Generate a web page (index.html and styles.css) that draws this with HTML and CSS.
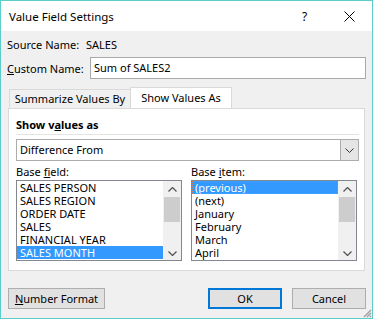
FILE: index.html
```html
<!DOCTYPE html>
<html lang="en">
<head>
  <meta charset="UTF-8" />
  <title>Value Field Settings</title>
  <link rel="stylesheet" href="styles.css">
</head>
<body>
  <div class="window">
    <div class="titlebar">
      <span class="title">Value Field Settings</span>
      <span class="help">?</span>
      <svg class="close" width="11" height="11" viewBox="0 0 11 11">
        <path d="M0.5 0.5 L10.5 10.5 M10.5 0.5 L0.5 10.5" stroke="#000" stroke-width="1" fill="none"/>
      </svg>
    </div>

    <div class="content">
      <div class="row">
        <span class="label source-label">Source Name:</span>
        <span>SALES</span>
      </div>
      <div class="row">
        <span class="label"><u>C</u>ustom Name:</span>
        <div class="input">Sum of SALES2</div>
      </div>

      <div class="tabs">
        <div class="tab">Summarize Values By</div>
        <div class="tab active">Show Values As</div>
      </div>

      <div class="panel">
        <div class="section">Show v<u>a</u>lues as</div>
        <div class="select">
          <span class="select-text">Difference From</span>
          <span class="select-btn">
            <svg width="9" height="5" viewBox="0 0 9 5"><path d="M0.5 0.5 L4.5 4.5 L8.5 0.5" stroke="#333" fill="none"/></svg>
          </span>
        </div>

        <div class="cols">
          <div class="col">
            <div class="field-label">Base <u>f</u>ield:</div>
            <div class="list">
              <div class="items">
                <div class="item">SALES PERSON</div>
                <div class="item">SALES REGION</div>
                <div class="item">ORDER DATE</div>
                <div class="item">SALES</div>
                <div class="item">FINANCIAL YEAR</div>
                <div class="item selected">SALES MONTH</div>
              </div>
              <div class="scrollbar">
                <svg width="9" height="5" viewBox="0 0 9 5"><path d="M0.5 4.5 L4.5 0.5 L8.5 4.5" stroke="#555" stroke-width="1.3" fill="none"/></svg>
                <div class="track"><div class="thumb"></div></div>
                <svg width="9" height="5" viewBox="0 0 9 5"><path d="M0.5 0.5 L4.5 4.5 L8.5 0.5" stroke="#555" stroke-width="1.3" fill="none"/></svg>
              </div>
            </div>
          </div>
          <div class="col">
            <div class="field-label">Base <u>i</u>tem:</div>
            <div class="list">
              <div class="items">
                <div class="item selected focused">(previous)</div>
                <div class="item">(next)</div>
                <div class="item">January</div>
                <div class="item">February</div>
                <div class="item">March</div>
                <div class="item">April</div>
              </div>
              <div class="scrollbar">
                <svg width="9" height="5" viewBox="0 0 9 5"><path d="M0.5 4.5 L4.5 0.5 L8.5 4.5" stroke="#555" stroke-width="1.3" fill="none"/></svg>
                <div class="track"><div class="thumb"></div></div>
                <svg width="9" height="5" viewBox="0 0 9 5"><path d="M0.5 0.5 L4.5 4.5 L8.5 0.5" stroke="#555" stroke-width="1.3" fill="none"/></svg>
              </div>
            </div>
          </div>
        </div>
      </div>

      <div class="buttons">
        <button class="btn wide"><u>N</u>umber Format</button>
        <span class="spacer"></span>
        <button class="btn default">OK</button>
        <button class="btn">Cancel</button>
      </div>
    </div>

    <svg class="grip" width="10" height="10" viewBox="0 0 10 10">
      <path d="M9 2 L2 9 M9 5 L5 9 M9 8 L8 9" stroke="#9a9a9a" stroke-width="1.2" fill="none"/>
    </svg>
  </div>
</body>
</html>
```

FILE: styles.css
```css
* {
  box-sizing: border-box;
}
body {
  margin: 0;
  font-family: "Noto Sans", sans-serif;
  font-size: 11px;
  color: #000;
  white-space: nowrap;
}
.window {
  position: relative;
  width: 373px;
  height: 319px;
  border: 1px solid #5ccdcd;
  background: #f0f0f0;
  display: flex;
  flex-direction: column;
}
.titlebar {
  height: 30px;
  background: #fff;
  display: flex;
  align-items: center;
  padding-left: 8px;
}
.title {
  flex: 1;
  font-size: 11.5px;
}
.help {
  font-size: 12px;
  width: 10px;
  margin-right: 32px;
}
.close {
  margin-right: 17px;
}
.content {
  flex: 1;
  padding: 2px 6px 0 6px;
  display: flex;
  flex-direction: column;
}
.row {
  height: 22px;
  display: flex;
  align-items: center;
  margin-bottom: 2px;
}
.label {
  width: 83px;
}
.source-label {
  width: 79px;
}
.input {
  flex: 1;
  height: 22px;
  border: 1px solid #a9a9a9;
  background: #fff;
  padding-left: 3px;
  line-height: 19px;
}
.tabs {
  display: flex;
  align-items: flex-end;
  margin-top: 6px;
  padding-left: 2px;
  height: 21px;
}
.tab {
  width: 121px;
  height: 19px;
  border: 1px solid #d9d9d9;
  border-bottom: none;
  border-right: none;
  line-height: 17px;
  text-align: center;
}
.tab.active {
  width: 102px;
  height: 22px;
  margin-bottom: -1px;
  background: #fff;
  line-height: 20px;
  border-right: 1px solid #d9d9d9;
}
.panel {
  margin: 0 1px 0 1px;
  height: 163px;
  background: #fff;
  border: 1px solid #d9d9d9;
  padding: 6px 5px 0 7px;
}
.section {
  font-weight: bold;
  height: 20px;
  line-height: 20px;
  border-bottom: 1px solid #e3e3e3;
}
.select {
  margin-top: 4px;
  height: 22px;
  border: 1px solid #acacac;
  display: flex;
  align-items: stretch;
}
.select-text {
  flex: 1;
  padding-left: 3px;
  line-height: 20px;
}
.select-btn {
  width: 18px;
  background: #e5e5e5;
  border-left: 1px solid #acacac;
  display: flex;
  align-items: center;
  justify-content: center;
}
.cols {
  display: grid;
  grid-template-columns: 166px 166px;
  column-gap: 9px;
  margin-top: 2px;
}
.field-label {
  height: 17px;
  line-height: 17px;
}
.list {
  height: 81px;
  border: 1px solid #828790;
  display: flex;
}
.items {
  flex: 1;
}
.item {
  height: 13px;
  line-height: 13px;
  padding-left: 3px;
}
.item.selected {
  background: #3399ff;
  color: #fff;
}
.item.focused {
  outline: 1px dotted #e08040;
  outline-offset: -1px;
}
.scrollbar {
  width: 18px;
  background: #f0f0f0;
  display: flex;
  flex-direction: column;
  align-items: center;
  padding: 6px 0 4px 0;
}
.track {
  flex: 1;
  width: 100%;
  padding: 5px 0 0 1px;
}
.thumb {
  width: 16px;
  height: 25px;
  background: #cdcdcd;
}
.buttons {
  display: flex;
  margin-top: 17px;
  gap: 10px;
  padding-left: 1px;
}
.spacer {
  flex: 1;
}
.btn {
  font-family: "Noto Sans", sans-serif;
  font-size: 11px;
  color: #000;
  height: 21px;
  width: 74px;
  background: #e1e1e1;
  border: 1px solid #adadad;
  padding: 0;
}
.btn.wide {
  width: 97px;
}
.btn.default {
  border: 2px solid #0078d7;
}
.grip {
  position: absolute;
  right: 0;
  bottom: 0;
}
```
